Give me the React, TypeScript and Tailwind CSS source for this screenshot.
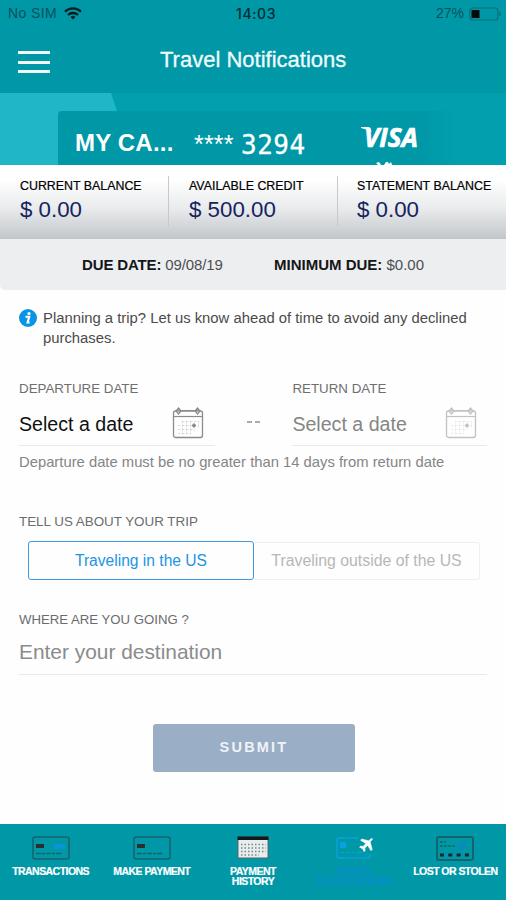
import React from "react";

const sans = "font-['Liberation_Sans',Arial,sans-serif]";

function CalendarIcon({ className }: { className: string }) {
  return (
    <svg width="32" height="32" viewBox="0 0 32 32" fill="none" stroke="currentColor" className={className}>
      <rect x="1.500" y="4" width="29" height="26.500" rx="2" strokeWidth="1.300" />
      <path d="M2 9.500H30" strokeWidth="1.200" />
      <path d="M8 3.500H25" strokeWidth="1" />
      <path d="M6.500 1l2.500 3-2.500 3-2.500-3zM25.500 1l2.500 3-2.500 3-2.500-3z" strokeWidth="1.200" />
      <path d="M10 14.500H27M6 18.500H27M6 22.500H23M6 26.500H19" strokeWidth=".8" strokeDasharray="2.500 1.500" opacity=".4" />
      <path d="M10.500 14V27M14.500 14V27M18.500 14V27M26.500 14V21" strokeWidth=".5" opacity=".35" />
      <path d="M22 16.500v4M20 18.500h4" strokeWidth="2" />
    </svg>
  );
}

function BankCard({ tinted = false }: { tinted?: boolean }) {
  return (
    <svg width="38" height="24" viewBox="0 0 38 24" fill="none">
      <rect x="1" y="1" width="36" height="22" rx="2" stroke="#17626b" strokeWidth="1.500" />
      <rect x="4" y="8" width="8" height="4" fill="#2b2f30" />
      {tinted && <rect x="22" y="8" width="11" height="5" fill="#0795d3" />}
      <path d="M4 17.500h25" stroke="#17626b" strokeWidth="1.500" strokeDasharray="5 1 3 1" />
    </svg>
  );
}

function HistoryIcon() {
  return (
    <svg width="32" height="24" viewBox="0 0 32 24" fill="none">
      <rect x="1" y="1" width="30" height="21" fill="#e8eeee" stroke="#596466" />
      <rect x=".5" y=".500" width="31" height="3.500" fill="#10191b" />
      <path d="M4 8.500h25M4 12h25M4 15.500h25M4 19h18" stroke="#7b8587" strokeWidth="1.500" strokeDasharray="1.500 2" />
    </svg>
  );
}

function TravelIcon() {
  return (
    <svg width="38" height="24" viewBox="0 0 38 24" fill="none">
      <path d="M23 2H4a2 2 0 0 0-2 2v16a2 2 0 0 0 2 2h29a2 2 0 0 0 2-2v-2" stroke="#07a0e0" strokeWidth="1.500" />
      <rect x="5" y="6" width="6" height="6" fill="#07a0e0" />
      <path d="M5 16.500h22" stroke="#07a0e0" strokeDasharray="4 2" />
      <path transform="translate(24.500 2.500) scale(.51)" d="M21 6.500L24.500 3C25.600 1.700 25.500.300 25 0c-.800-.500-2.200 0-3.200 1L18 4.500 4.500 1 2 3.500l10.500 6.300L7 15.500l-4.500-.7L0 17l6 3 3 6 2.200-2.500-.7-4.500 5.500-5.500L22.500 24l2.500-2.500z" fill="#fff" stroke="#fff" />
    </svg>
  );
}

function LostIcon() {
  return (
    <svg width="38" height="25" viewBox="0 0 38 25" fill="none">
      <rect x="1" y="1" width="36" height="23" rx="2" stroke="#17626b" strokeWidth="2" />
      <path d="M21 9l10-4v6l-8 4z" fill="#078eb7" />
      <path d="M4 6h6M4 10h15" stroke="#204c52" strokeWidth="1.200" strokeDasharray="3 1" />
      <path d="M4 19h31" stroke="#162629" strokeWidth="3" strokeDasharray="4 4.300" />
    </svg>
  );
}

function Balance({ label, value, className }: { label: string; value: string; className: string }) {
  return (
    <div className={`h-[50px] ${className}`}>
      <div className="h-5 whitespace-nowrap text-[12.4px] leading-[20px] text-black [-webkit-text-stroke:0.2px_black]">{label}</div>
      <div className="whitespace-nowrap text-[22.3px] leading-[27px] text-[#17235f]">{value}</div>
    </div>
  );
}

function Tab({ icon, lines, active = false }: { icon: React.ReactNode; lines: string[]; active?: boolean }) {
  return (
    <div className="flex w-[101.2px] flex-col items-center pt-3">
      <div className="flex h-[27px] items-start">{icon}</div>
      <div className={`mt-[3px] whitespace-nowrap text-center text-[10.5px] font-bold leading-[10px] tracking-[-0.55px] ${active ? "text-[#078fcb]" : "text-white [-webkit-text-stroke:0.2px_white]"}`}>
        {lines.map((l) => <div key={l}>{l}</div>)}
      </div>
    </div>
  );
}

export default function App() {
  return (
    <div className={`flex h-[900px] w-[506px] flex-col overflow-hidden bg-[#fefefe] ${sans}`}>
      <header className="h-[93px] shrink-0 bg-[#0098a7]">
        <div className="flex h-[27px] items-center pl-2 pr-[5px] text-[14px] text-[#07515a]">
          <span className="w-[56px] tracking-[0.4px]">No SIM</span>
          <svg width="18" height="13" viewBox="0 0 18 13" fill="none" stroke="#041e22" strokeWidth="2.300">
            <path d="M1 4.700a11.500 11.500 0 0 1 16 0M4 8a7.200 7.200 0 0 1 10 0" />
            <path d="M9 12.500L6.500 10a3.600 3.600 0 0 1 5 0z" fill="#041e22" stroke="none" />
          </svg>
          <span className="ml-[154px] w-[46px] font-['Inter',sans-serif] text-[14px] font-medium tracking-[0.6px] text-[#052b30]">14:03</span>
          <span className="ml-auto">27%</span>
          <svg className="ml-[5px]" width="32" height="14" viewBox="0 0 32 14">
            <rect x=".8" y="1" width="28" height="12" rx="2.500" fill="none" stroke="#096f79" strokeWidth="1.200" />
            <rect x="2.500" y="3" width="8" height="8" fill="#020a0b" />
            <path d="M30 5v4l1.500-1V6z" fill="#096f79" />
          </svg>
        </div>
        <div className="flex h-[66px] pl-[18px]">
          <div className="mt-6 flex h-[22px] w-8 flex-col justify-between">
            <i className="h-[3px] bg-[#f0fafa]" /><i className="h-[3px] bg-[#f0fafa]" /><i className="h-[3px] bg-[#f0fafa]" />
          </div>
          <h1 className="ml-[110px] mt-[19px] whitespace-nowrap text-[22px] leading-7 text-[#effbfc] [-webkit-text-stroke:0.3px_#effbfc]">Travel Notifications</h1>
        </div>
      </header>

      <section className="relative h-[72px] shrink-0 overflow-hidden bg-[#02a0ae]">
        <svg className="absolute left-0 top-0" width="118" height="72"><path d="M0 0H111L117 18V72H0Z" fill="#1fb6c8" /></svg>
        <div className="relative ml-[58px] mt-[18px] flex h-[54px] rounded-tl-[4px] bg-[linear-gradient(90deg,#0097a7_80%,#02a0ae_90%)] text-white">
          <span className="ml-[17px] mt-[16px] w-[119px] whitespace-nowrap text-[24px] font-bold leading-8 tracking-[0.2px]">MY CA...</span>
          <span className="mt-[17px] w-[47px] text-[25px] leading-8 tracking-[0.2px]">****</span>
          <span className="mt-[18px] w-[120px] font-['DejaVu_Sans_Mono',monospace] text-[26px] leading-8 tracking-[0.5px] [-webkit-text-stroke:0.3px_white]">3294</span>
          <span className="ml-[3px] mt-[10px] font-['Open_Sans',sans-serif] text-[26px] font-bold italic leading-8 tracking-[0px] [-webkit-text-stroke:0.7px_white]">VISA</span>
          <svg className="absolute left-[303px] top-[16px]" width="38" height="38" viewBox="0 0 38 38" fill="white">
            <path d="M0 0h8l3 5-4-2-7-2zM15 36l3-1 2 3h-3zM23 38l2-3h2l1 2 2-2 1 3z" />
          </svg>
        </div>
      </section>

      <section className="flex h-[74px] shrink-0 border-b-2 border-[#c1c7ca] bg-[linear-gradient(#fff_20%,#e9ebec_60%,#c5c9cc)] pt-[11px]">
        <Balance label="CURRENT BALANCE" value="$ 0.00" className="w-[169px] border-r border-[#c7c9cb] pl-5" />
        <Balance label="AVAILABLE CREDIT" value="$ 500.00" className="w-[169px] border-r border-[#c7c9cb] pl-5" />
        <Balance label="STATEMENT BALANCE" value="$ 0.00" className="w-[168px] pl-[19px]" />
      </section>
      <section className="flex h-[51px] shrink-0 rounded-bl-[5px] bg-[#eceef0] pl-[82px] pt-4 text-[15px] leading-5 text-[#4c4e50]">
        <div className="w-[192px] whitespace-nowrap tracking-[-0.14px]"><b className="text-[#151617]">DUE DATE:</b> 09/08/19</div>
        <div className="whitespace-nowrap"><b className="text-[#151617]">MINIMUM DUE:</b> $0.00</div>
      </section>

      <main className="flex min-h-0 grow flex-col px-[19px] pt-[17px]">
        <div className="flex h-[65px] text-[14.84px] leading-5 text-[#4b4b4b]">
          <svg className="mr-[6px] shrink-0" width="18" height="20" viewBox="0 0 18 20">
            <circle cx="9" cy="11" r="9" fill="#0994e5" />
            <circle cx="10" cy="6.500" r="1.600" fill="white" />
            <path d="M6.500 9.800h3.700L8.600 15.500h2" stroke="white" strokeWidth="2.100" fill="none" />
          </svg>
          <p className="mt-px whitespace-nowrap">Planning a trip? Let us know ahead of time to avoid any declined<br />purchases.</p>
        </div>
        <div className="flex h-[74px]">
          <div className="h-[74px] w-[196px] border-b border-[#e9e9e9] pt-[7px]">
            <div className="text-[13.35px] leading-5 text-[#6f6f6f]">DEPARTURE DATE</div>
            <div className="flex h-[50px] items-center text-[19.6px] text-[#111]"><span className="w-[153px] pt-px">Select a date</span><CalendarIcon className="-mt-[3px] text-[#8b8b8b]" /></div>
          </div>
          <div className="mt-[49px] flex w-[78px] justify-center gap-[3px]"><i className="h-[2px] w-[5px] bg-[#aaa]" /><i className="h-[2px] w-[5px] bg-[#aaa]" /></div>
          <div className="h-[74px] w-[195px] border-b border-[#e9e9e9] pt-[7px]">
            <div className="text-[13.35px] leading-5 text-[#6f6f6f]">RETURN DATE</div>
            <div className="flex h-[50px] items-center text-[19.6px] text-[#858585]"><span className="w-[153px] pt-px">Select a date</span><CalendarIcon className="-mt-[3px] text-[#c2c2c2]" /></div>
          </div>
        </div>
        <p className="mt-[6px] whitespace-nowrap text-[14.8px] leading-5 text-[#858585]">Departure date must be no greater than 14 days from return date</p>
        <div className="mt-10 text-[13.4px] leading-5 text-[#6c6c6c]">TELL US ABOUT YOUR TRIP</div>
        <div className="ml-[9px] mt-[9px] flex h-10 w-[453px] shrink-0">
          <button className="h-[39px] w-[226px] rounded-[3px] border border-[#3f9be0] pt-px text-[15.6px] text-[#2394e2]">Traveling in the US</button>
          <button className="mt-px h-[38px] w-[226px] whitespace-nowrap rounded-r-[3px] border border-l-0 border-[#f0f0f0] text-[15.84px] text-[#b7b7b7]">Traveling outside of the US</button>
        </div>
        <div className="mt-[29px] text-[13.2px] leading-5 text-[#6c6c6c]">WHERE ARE YOU GOING ?</div>
        <div className="h-[45px] shrink-0 border-b border-[#e9e9e9] pt-[8px] text-[20.9px] leading-7 text-[#8b8b8b]">Enter your destination</div>
        <button className="ml-[134px] mt-[49px] h-12 w-[202px] shrink-0 rounded-[3px] bg-[#9aaec6] text-[14.5px] font-bold tracking-[2.2px] text-[#f0f4f8]">SUBMIT</button>
      </main>

      <nav className="flex h-[76px] shrink-0 bg-[#0098a7]">
        <Tab icon={<BankCard tinted />} lines={["TRANSACTIONS"]} />
        <Tab icon={<BankCard />} lines={["MAKE PAYMENT"]} />
        <Tab icon={<HistoryIcon />} lines={["PAYMENT", "HISTORY"]} />
        <Tab icon={<TravelIcon />} lines={["TRAVEL", "NOTIFICATIONS"]} active />
        <Tab icon={<LostIcon />} lines={["LOST OR STOLEN"]} />
      </nav>
    </div>
  );
}
